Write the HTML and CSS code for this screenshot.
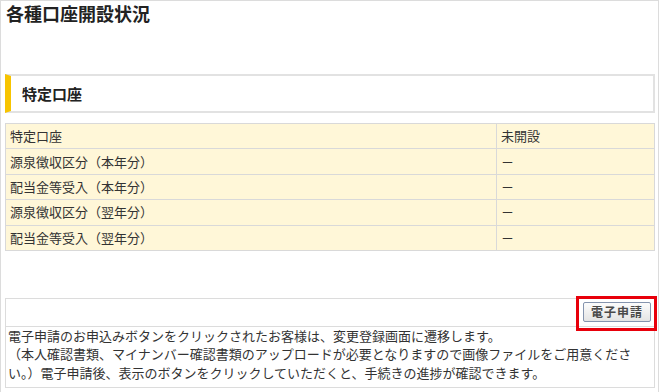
FILE: index.html
```html
<!DOCTYPE html>
<html lang="ja">
<head>
  <meta charset="UTF-8" />
  <meta name="viewport" content="width=device-width, initial-scale=1.0"/>
  <title>各種口座開設状況</title>
  <link rel="stylesheet" href="styles.css">
</head>
<body>
  <div class="page">
    <h1 class="page-title">各種口座開設状況</h1>

    <div class="section-head">特定口座</div>

    <table class="status-table">
      <tr>
        <td class="col-name">特定口座</td>
        <td class="col-state">未開設</td>
      </tr>
      <tr>
        <td class="col-name">源泉徴収区分（本年分）</td>
        <td class="col-state">－</td>
      </tr>
      <tr>
        <td class="col-name">配当金等受入（本年分）</td>
        <td class="col-state">－</td>
      </tr>
      <tr>
        <td class="col-name">源泉徴収区分（翌年分）</td>
        <td class="col-state">－</td>
      </tr>
      <tr>
        <td class="col-name">配当金等受入（翌年分）</td>
        <td class="col-state">－</td>
      </tr>
    </table>

    <div class="apply-bar">
      <!-- 赤枠は注目表示 -->
      <span class="apply-mark">
        <button type="button" class="apply-btn">電子申請</button>
      </span>
    </div>
    <div class="apply-note">
      電子申請のお申込みボタンをクリックされたお客様は、変更登録画面に遷移します。<br>
      （本人確認書類、マイナンバー確認書類のアップロードが必要となりますので画像ファイルをご用意ください。）電子申請後、表示のボタンをクリックしていただくと、手続きの進捗が確認できます。
    </div>
  </div>
</body>
</html>
```

FILE: styles.css
```css
* {
  box-sizing: border-box;
}

body {
  margin: 0;
  font-family: 'Noto Sans CJK JP', 'Noto Sans', sans-serif;
  color: #333;
  background-color: #fff;
}

.page {
  width: 659px;
  border: 1px solid #dcdcdc;
  border-bottom: none;
  padding: 0 3px 20px 4px;
}

.page-title {
  margin: -1px 0 0 1px;
  font-size: 18px;
  line-height: 26px;
  font-weight: bold;
  color: #222;
}

.section-head {
  margin-top: 48px;
  height: 39px;
  border: 2px solid #e2e2e2;
  border-left: 6px solid #f7c400;
  padding-left: 11px;
  font-size: 15px;
  font-weight: bold;
  line-height: 35px;
  color: #222;
}

.status-table {
  width: 100%;
  margin-top: 10px;
  border-collapse: collapse;
  background-color: #fff7d8;
  font-size: 13px;
}

.status-table td {
  height: 25.4px;
  border: 1px solid #d9d9d9;
  padding: 0 4px 1px;
  color: #333;
}

.col-name {
  width: 491px;
}

.apply-bar {
  margin-top: 47px;
  border: 1px solid #dcdcdc;
  height: 29px;
  padding: 3px 3px 0 0;
  display: flex;
  justify-content: flex-end;
}

.apply-mark {
  position: relative;
  display: flex;
}

.apply-mark::after {
  content: "";
  position: absolute;
  top: -6px;
  right: -6px;
  bottom: -5px;
  left: -7px;
  border: 3px solid #e8000b;
}

.apply-btn {
  width: 68px;
  height: 20px;
  padding: 0;
  font-family: inherit;
  font-size: 12px;
  font-weight: bold;
  color: #4a4a4a;
  letter-spacing: 1px;
  background: linear-gradient(#fcfcfc, #e4e4e4);
  border: 1px solid #8594ae;
  border-radius: 2px;
}

.apply-note {
  border: 1px solid #dcdcdc;
  border-top: none;
  padding: 0 2px 5px 2px;
  font-size: 13px;
  line-height: 18.5px;
  color: #333;
}
```
